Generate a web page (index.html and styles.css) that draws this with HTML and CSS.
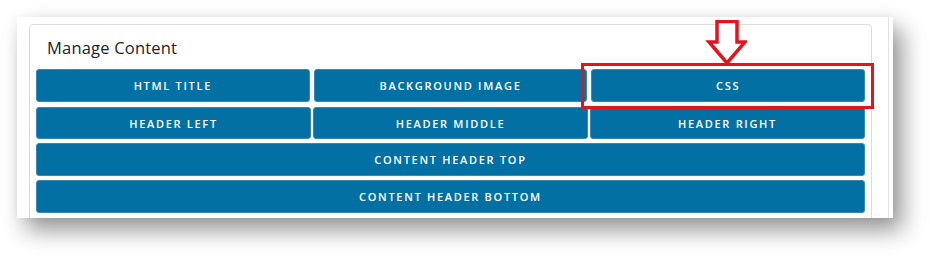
FILE: index.html
```html
<!DOCTYPE html>
<html lang="en">
<head>
  <meta charset="UTF-8">
  <title>Manage Content</title>
  <link rel="stylesheet" href="styles.css">
</head>
<body>
  <div class="paper">
    <div class="pane">
      <div class="card">
        <h3>Manage Content</h3>
        <div class="row row-wide">
          <button class="btn">HTML Title</button>
          <button class="btn">Background Image</button>
          <button class="btn">CSS</button>
        </div>
        <div class="row row-tight">
          <button class="btn">Header Left</button>
          <button class="btn">Header Middle</button>
          <button class="btn">Header Right</button>
        </div>
        <div class="row">
          <button class="btn">Content Header Top</button>
        </div>
        <div class="row">
          <button class="btn">Content Header Bottom</button>
        </div>
      </div>
    </div>

    <!-- annotation -->
    <div class="highlight"></div>
    <svg class="arrow" width="48" height="46" viewBox="0 0 48 46">
      <path d="M18 1.5 H38 V22 H46 L28 43 L10 22 H18 Z" fill="#fff" stroke="#e3141e" stroke-width="3.5"/>
    </svg>
  </div>
</body>
</html>
```

FILE: styles.css
```css
html, body {
  height: 100%;
}
body {
  margin: 0;
  padding: 17px;
  box-sizing: border-box;
  background: #fff;
  font-family: "Open Sans", Arial, sans-serif;
}
.paper {
  position: relative;
  width: 876px;
  height: 201px;
  overflow: hidden;
  background: #fff;
  box-shadow: 9px 12px 22px rgba(0, 0, 0, 0.42), 0 0 8px rgba(0, 0, 0, 0.05);
}
.pane {
  width: 872px;
  height: 100%;
  border-right: 1px solid #e2e2e2;
  padding: 7px 0 0 12px;
  box-sizing: border-box;
}
.card {
  width: 843px;
  height: 220px;
  box-sizing: border-box;
  border: 1px solid #dcdcdc;
  border-radius: 4px;
  padding: 0 6px;
}
h3 {
  margin: 0;
  padding: 11px 0 0 11px;
  height: 33px;
  font-weight: 400;
  font-size: 16.5px;
  color: #1d1d2b;
  letter-spacing: 0.2px;
}
.row {
  display: flex;
  gap: 4px;
  margin-bottom: 4px;
}
.row-wide {
  margin-bottom: 5px;
}
.row-tight {
  gap: 2px;
}
.btn {
  flex: 1;
  height: 33px;
  border: 1px solid #3b86b2;
  border-radius: 3px;
  background: #0270a2;
  color: #fff;
  font-family: "Open Sans", Arial, sans-serif;
  font-weight: 600;
  font-size: 11px;
  letter-spacing: 1.7px;
  text-transform: uppercase;
  padding: 0;
}
.row-tight .btn {
  height: 32px;
}
.highlight {
  position: absolute;
  left: 564px;
  top: 46px;
  width: 287px;
  height: 40px;
  border: 3px solid #e3141e;
}
.arrow {
  position: absolute;
  left: 682px;
  top: 3px;
}
```
